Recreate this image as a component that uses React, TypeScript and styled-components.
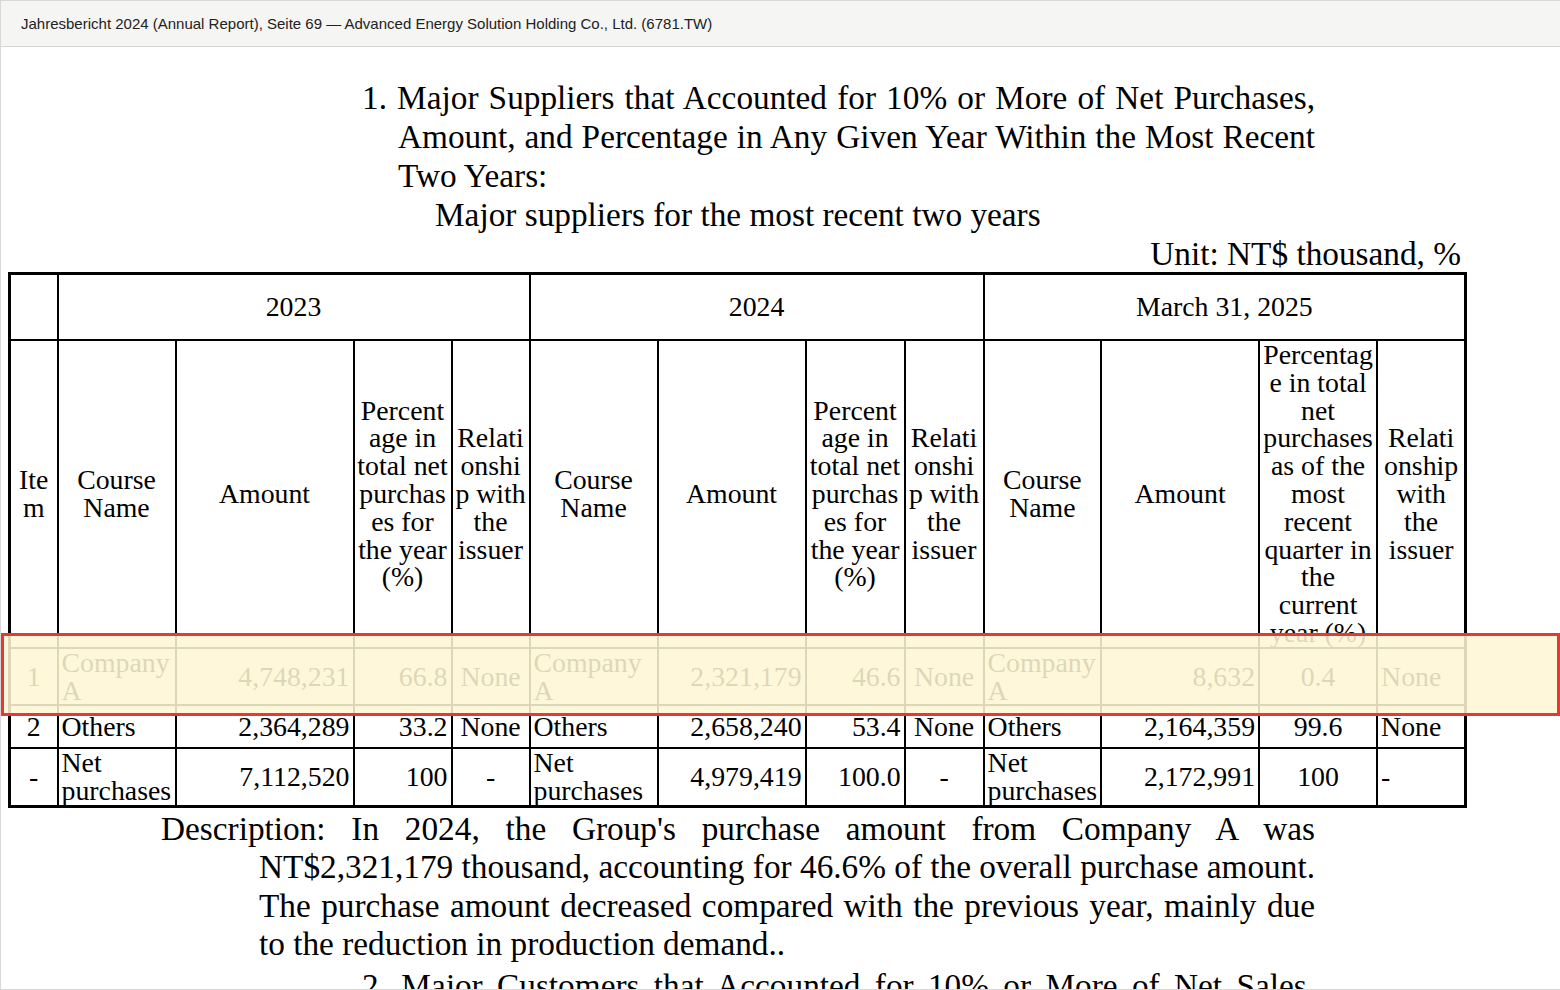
import React from 'react';
import styled, { createGlobalStyle } from 'styled-components';

const GlobalStyle = createGlobalStyle`
  html, body {
    margin: 0;
    padding: 0;
    background: #fff;
  }
  * {
    box-sizing: border-box;
  }
`;

type Align = 'left' | 'center' | 'right';

const colWidths = [48, 118, 178, 98, 78, 128, 148, 99, 79, 117.5, 158, 118, 88.5];
const aligns: Align[] = [
  'center', 'left', 'right', 'right', 'center',
  'left', 'right', 'right', 'center',
  'left', 'right', 'center', 'left',
];

const years = [
  { label: '2023', span: 4 },
  { label: '2024', span: 4 },
  { label: 'March 31, 2025', span: 4 },
];

const pctYear = ['Percent', 'age in', 'total net', 'purchas', 'es for', 'the year', '(%)'];
const relYear = ['Relati', 'onshi', 'p with', 'the', 'issuer'];

const headLabels: string[][] = [
  ['Ite', 'm'],
  ['Course', 'Name'], ['Amount'], pctYear, relYear,
  ['Course', 'Name'], ['Amount'], pctYear, relYear,
  ['Course', 'Name'], ['Amount'],
  ['Percentag', 'e in total', 'net', 'purchases', 'as of the', 'most', 'recent', 'quarter in', 'the', 'current', 'year (%)'],
  ['Relati', 'onship', 'with', 'the', 'issuer'],
];

const rows = [
  {
    height: 57,
    cells: ['1', 'Company A', '4,748,231', '66.8', 'None', 'Company A', '2,321,179', '46.6', 'None', 'Company A', '8,632', '0.4', 'None'],
  },
  {
    height: 43,
    cells: ['2', 'Others', '2,364,289', '33.2', 'None', 'Others', '2,658,240', '53.4', 'None', 'Others', '2,164,359', '99.6', 'None'],
  },
  {
    height: 58,
    cells: ['-', 'Net purchases', '7,112,520', '100', '-', 'Net purchases', '4,979,419', '100.0', '-', 'Net purchases', '2,172,991', '100', '-'],
  },
];

const App = () => {
  return (
    <>
      <GlobalStyle />
      <Frame>
        <TopBar>
          Jahresbericht 2024 (Annual Report), Seite 69 — Advanced Energy Solution Holding Co., Ltd. (6781.TW)
        </TopBar>

        <Doc>
          <Para $left={354} $width={953} $hang={36}>
            <TextLine $justify $lead={36}>
              1. Major Suppliers that Accounted for 10% or More of Net Purchases,
            </TextLine>
            <TextLine $justify>Amount, and Percentage in Any Given Year Within the Most Recent</TextLine>
            <TextLine>Two Years:</TextLine>
          </Para>
          <Para $left={427} $width={900}>
            <TextLine>Major suppliers for the most recent two years</TextLine>
          </Para>
          <Unit>Unit: NT$ thousand, %</Unit>

          <Table>
            <colgroup>
              {colWidths.map((w, i) => (
                <Col key={i} $w={w} />
              ))}
            </colgroup>
            <thead>
              <Row $h={67}>
                <HeadCell />
                {years.map((y) => (
                  <HeadCell key={y.label} colSpan={y.span}>
                    {y.label}
                  </HeadCell>
                ))}
              </Row>
              <Row $h={306}>
                {headLabels.map((lines, i) => (
                  <HeadCell key={i}>
                    {lines.map((l, j) => (
                      <React.Fragment key={j}>
                        {j > 0 && <br />}
                        {l}
                      </React.Fragment>
                    ))}
                  </HeadCell>
                ))}
              </Row>
            </thead>
            <tbody>
              {rows.map((r, ri) => (
                <Row key={ri} $h={r.height}>
                  {r.cells.map((c, ci) => (
                    <Cell key={ci} $align={aligns[ci]}>
                      {c}
                    </Cell>
                  ))}
                </Row>
              ))}
            </tbody>
          </Table>

          <Para $left={153} $width={1154} $hang={98} $gap={2} $lh={38.3}>
            <TextLine $justify $lead={98}>
              Description: In 2024, the Group's purchase amount from Company A was
            </TextLine>
            <TextLine $justify>
              NT$2,321,179 thousand, accounting for 46.6% of the overall purchase amount.
            </TextLine>
            <TextLine $justify>
              The purchase amount decreased compared with the previous year, mainly due
            </TextLine>
            <TextLine>to the reduction in production demand..</TextLine>
          </Para>

          <Para $left={354} $width={953} $hang={36} $gap={3}>
            <TextLine $justify $lead={36}>
              2. Major Customers that Accounted for 10% or More of Net Sales,
            </TextLine>
            <TextLine $justify>Amount, and Percentage in Any Given Year Within the Most Recent</TextLine>
            <TextLine>Two Years:</TextLine>
          </Para>

          {/* highlighted row marker */}
          <Highlight />
        </Doc>
      </Frame>
    </>
  );
};

export default App;

const Frame = styled.div`
  width: 1560px;
  height: 990px;
  display: flex;
  flex-direction: column;
  border: 1px solid #d8d8d6;
  border-right: none;
  overflow: hidden;
`;

const TopBar = styled.header`
  flex: 0 0 46px;
  display: flex;
  align-items: center;
  padding-left: 20px;
  background: #f5f5f3;
  border-bottom: 1px solid #d6d6d4;
  font-family: 'Liberation Sans', Arial, sans-serif;
  font-size: 15px;
  color: #222;
  white-space: nowrap;
`;

const Doc = styled.main`
  flex: 1;
  position: relative;
  overflow: hidden;
  padding: 31px 0 0 7px;
  font-family: 'Liberation Serif', 'Times New Roman', serif;
  font-size: 33.3px;
  line-height: 39px;
  color: #000;
`;

const Para = styled.div<{ $left: number; $width: number; $hang?: number; $gap?: number; $lh?: number }>`
  margin-left: ${(p) => p.$left}px;
  margin-top: ${(p) => p.$gap ?? 0}px;
  width: ${(p) => p.$width}px;
  padding-left: ${(p) => p.$hang ?? 0}px;
  ${(p) => (p.$lh ? `line-height: ${p.$lh}px;` : '')}
`;

const TextLine = styled.span<{ $justify?: boolean; $lead?: number }>`
  display: block;
  margin-left: ${(p) => (p.$lead ? -p.$lead : 0)}px;
  text-align: ${(p) => (p.$justify ? 'justify' : 'left')};
  text-align-last: ${(p) => (p.$justify ? 'justify' : 'auto')};
`;

const Unit = styled.div`
  width: 1453px;
  margin-bottom: -1.5px;
  text-align: right;
`;

const Table = styled.table`
  width: 1456px;
  table-layout: fixed;
  border-collapse: collapse;
  border: 3px solid #000;
  font-size: 27.8px;
  line-height: 27.8px;
`;

const Col = styled.col<{ $w: number }>`
  width: ${(p) => p.$w}px;
`;

const Row = styled.tr<{ $h: number }>`
  height: ${(p) => p.$h}px;
`;

const HeadCell = styled.th`
  border: 2px solid #000;
  padding: 0;
  font-weight: normal;
  text-align: center;
  vertical-align: middle;
`;

const Cell = styled.td<{ $align: Align }>`
  border: 2px solid #000;
  padding: 0 3px;
  text-align: ${(p) => p.$align};
  vertical-align: middle;
`;

const Highlight = styled.div`
  position: absolute;
  left: 0;
  right: 0;
  top: 586px;
  height: 83px;
  border: 3px solid #e53935;
  background: rgba(254, 246, 212, 0.87);
  pointer-events: none;
`;
